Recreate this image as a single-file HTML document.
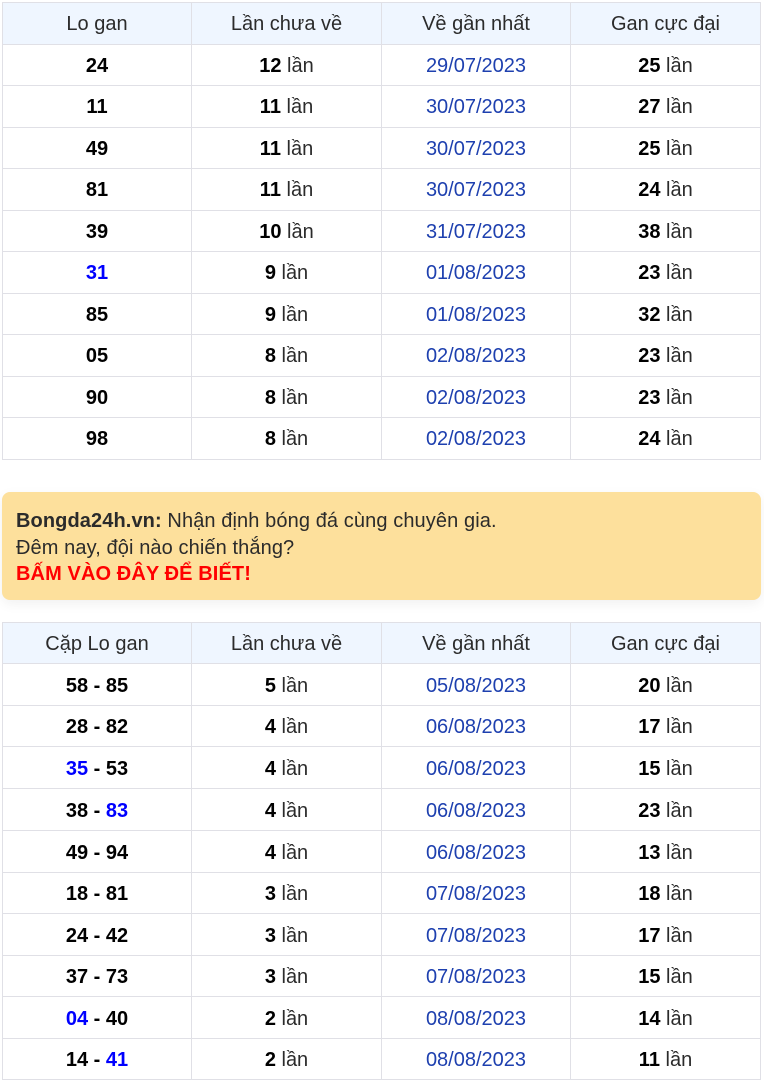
<!DOCTYPE html>
<html lang="vi">
<head>
<meta charset="utf-8">
<style>
html,body{margin:0;padding:0;background:#fff;width:764px;height:1084px;overflow:hidden}
body{font-family:"Liberation Sans","Noto Sans CJK SC",sans-serif;font-size:20px;color:#000;position:relative}
table{position:absolute;left:2px;width:758px;border-collapse:collapse;table-layout:fixed;font-size:20px}
td,th{border:1px solid #e0e0e6;padding:2px 0 0;text-align:center;vertical-align:middle;overflow:hidden;line-height:24px}
th{background:#eff6ff;font-weight:400;color:#2b2b2b}
td{color:#2b2b2b}
td b{color:#000}
td.d{color:#1e40af}
td.n{font-weight:700;color:#000}
.c{color:#00f}
#t1{top:2px}
#t2{top:622px}
#t1 tr{height:41.5px}
#t2 tr{height:42px}
#t2 tr:nth-child(1),#t2 tr:nth-child(3),#t2 tr:nth-child(7),#t2 tr:nth-child(9),#t2 tr:nth-child(11){height:41px}
.ad{position:absolute;left:2px;top:492px;width:759px;height:108px;box-sizing:border-box;padding:16px 14px 0;background:#fde09c;border-radius:8px;box-shadow:0 4px 12px rgba(0,0,0,.06);color:#2b2b2b;line-height:26.6px;font-size:20px;letter-spacing:.1px}
.ad div{height:26.6px;white-space:nowrap}
.ad .r{color:#f00;font-weight:700}
</style>
</head>
<body>
<table id="t1">
<colgroup><col style="width:189px"><col style="width:190px"><col style="width:189px"><col style="width:190px"></colgroup>
<tr><th>Lo gan</th><th>Lần chưa về</th><th>Về gần nhất</th><th>Gan cực đại</th></tr>
<tr><td class="n">24</td><td><b>12</b> lần</td><td class="d">29/07/2023</td><td><b>25</b> lần</td></tr>
<tr><td class="n">11</td><td><b>11</b> lần</td><td class="d">30/07/2023</td><td><b>27</b> lần</td></tr>
<tr><td class="n">49</td><td><b>11</b> lần</td><td class="d">30/07/2023</td><td><b>25</b> lần</td></tr>
<tr><td class="n">81</td><td><b>11</b> lần</td><td class="d">30/07/2023</td><td><b>24</b> lần</td></tr>
<tr><td class="n">39</td><td><b>10</b> lần</td><td class="d">31/07/2023</td><td><b>38</b> lần</td></tr>
<tr><td class="n"><span class="c">31</span></td><td><b>9</b> lần</td><td class="d">01/08/2023</td><td><b>23</b> lần</td></tr>
<tr><td class="n">85</td><td><b>9</b> lần</td><td class="d">01/08/2023</td><td><b>32</b> lần</td></tr>
<tr><td class="n">05</td><td><b>8</b> lần</td><td class="d">02/08/2023</td><td><b>23</b> lần</td></tr>
<tr><td class="n">90</td><td><b>8</b> lần</td><td class="d">02/08/2023</td><td><b>23</b> lần</td></tr>
<tr><td class="n">98</td><td><b>8</b> lần</td><td class="d">02/08/2023</td><td><b>24</b> lần</td></tr>
</table>

<div class="ad">
<div><b>Bongda24h.vn:</b> Nhận định bóng đá cùng chuyên gia.</div>
<div>Đêm nay, đội nào chiến thắng?</div>
<div class="r">BẤM VÀO ĐÂY ĐỂ BIẾT!</div>
</div>

<table id="t2">
<colgroup><col style="width:189px"><col style="width:190px"><col style="width:189px"><col style="width:190px"></colgroup>
<tr><th>Cặp Lo gan</th><th>Lần chưa về</th><th>Về gần nhất</th><th>Gan cực đại</th></tr>
<tr><td class="n">58 - 85</td><td><b>5</b> lần</td><td class="d">05/08/2023</td><td><b>20</b> lần</td></tr>
<tr><td class="n">28 - 82</td><td><b>4</b> lần</td><td class="d">06/08/2023</td><td><b>17</b> lần</td></tr>
<tr><td class="n"><span class="c">35</span> - 53</td><td><b>4</b> lần</td><td class="d">06/08/2023</td><td><b>15</b> lần</td></tr>
<tr><td class="n">38 - <span class="c">83</span></td><td><b>4</b> lần</td><td class="d">06/08/2023</td><td><b>23</b> lần</td></tr>
<tr><td class="n">49 - 94</td><td><b>4</b> lần</td><td class="d">06/08/2023</td><td><b>13</b> lần</td></tr>
<tr><td class="n">18 - 81</td><td><b>3</b> lần</td><td class="d">07/08/2023</td><td><b>18</b> lần</td></tr>
<tr><td class="n">24 - 42</td><td><b>3</b> lần</td><td class="d">07/08/2023</td><td><b>17</b> lần</td></tr>
<tr><td class="n">37 - 73</td><td><b>3</b> lần</td><td class="d">07/08/2023</td><td><b>15</b> lần</td></tr>
<tr><td class="n"><span class="c">04</span> - 40</td><td><b>2</b> lần</td><td class="d">08/08/2023</td><td><b>14</b> lần</td></tr>
<tr><td class="n">14 - <span class="c">41</span></td><td><b>2</b> lần</td><td class="d">08/08/2023</td><td><b>11</b> lần</td></tr>
</table>
</body>
</html>
